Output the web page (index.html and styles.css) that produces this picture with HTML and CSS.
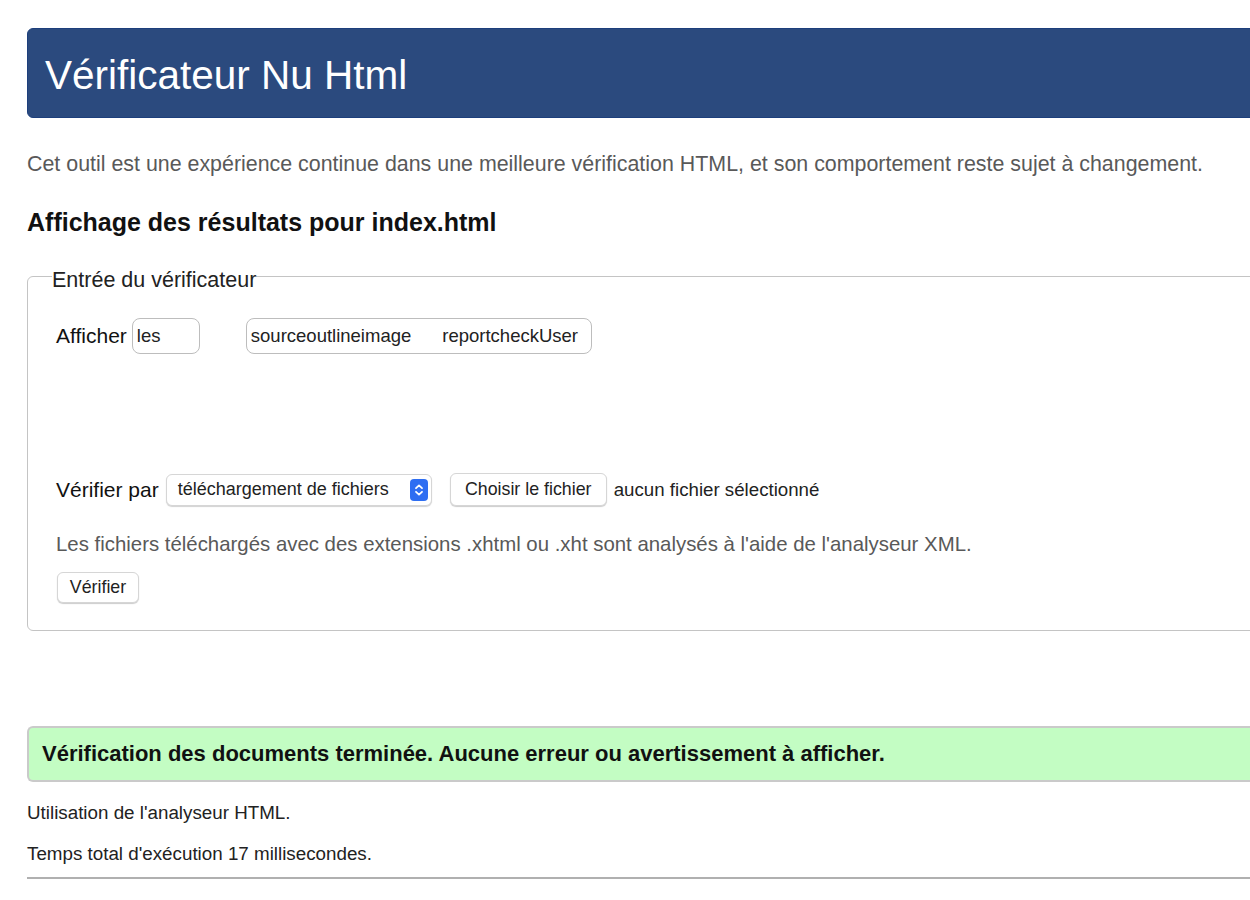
FILE: index.html
```html
<!DOCTYPE html>
<html lang="fr">
<head>
<meta charset="utf-8">
<title>Vérificateur Nu Html</title>
<link rel="stylesheet" href="styles.css">
</head>
<body>
<div class="page">
  <header class="banner"><h1 class="title">Vérificateur Nu Html</h1></header>
  <p class="intro">Cet outil est une expérience continue dans une meilleure vérification HTML, et son comportement reste sujet à changement.</p>
  <h2 class="results">Affichage des résultats pour index.html</h2>
  <fieldset class="checker">
    <legend class="checker-legend">Entrée du vérificateur</legend>
    <div class="row row-show">
      <span class="label">Afficher</span>
      <span class="box box-les">les</span>
      <span class="box box-opts"><span>sourceoutlineimage</span><span>reportcheckUser</span></span>
    </div>
    <div class="row row-by">
      <span class="label">Vérifier par</span>
      <span class="select">téléchargement de fichiers<span class="stepper"><svg width="12" height="16" viewBox="0 0 12 16"><path d="M3 6.2 6 3.4 9 6.2M3 9.8 6 12.6 9 9.8" fill="none" stroke="#fff" stroke-width="1.8" stroke-linecap="round" stroke-linejoin="round"/></svg></span></span>
      <button class="btn btn-file">Choisir le fichier</button>
      <span class="file-state">aucun fichier sélectionné</span>
    </div>
    <p class="note">Les fichiers téléchargés avec des extensions .xhtml ou .xht sont analysés à l'aide de l'analyseur XML.</p>
    <button class="btn btn-check">Vérifier</button>
  </fieldset>
  <div class="success">Vérification des documents terminée. Aucune erreur ou avertissement à afficher.</div>
  <p class="stat stat-first">Utilisation de l'analyseur HTML.</p>
  <p class="stat">Temps total d'exécution 17 millisecondes.</p>
  <hr class="rule">
</div>
</body>
</html>
```
FILE: styles.css
```css
html {
  overflow: hidden;
  background: #fff;
}
body {
  margin: 0;
  font-family: "Liberation Sans", Arial, Helvetica, sans-serif;
  color: #111;
}
.page {
  margin-left: 27px;
  margin-right: -40px;
  padding-top: 28px;
}
.banner {
  height: 90px;
  box-sizing: border-box;
  background: #2b4a7e;
  border: 1px solid #1d3f7c;
  border-radius: 6px 0 0 6px;
  padding: 4px 0 0 17px;
}
.title {
  margin: 0;
  font-size: 40.5px;
  font-weight: normal;
  line-height: 84px;
  color: #fff;
  white-space: nowrap;
}
.intro {
  margin: 31px 0 0;
  font-size: 21.4px;
  line-height: 30px;
  color: #595959;
  white-space: nowrap;
}
.results {
  margin: 25px 0 0;
  font-size: 25px;
  line-height: 36px;
  font-weight: bold;
  color: #111;
}
.checker {
  margin: 18px 0 0;
  padding: 23px 28px 27px;
  border: 1px solid #c4c4c4;
  border-radius: 6px 0 0 6px;
  min-width: 0;
}
.checker-legend {
  padding: 7px 0 0;
  margin-left: -4px;
  font-size: 21.5px;
  line-height: 30px;
  color: #222;
}
.row {
  display: flex;
  align-items: center;
  white-space: nowrap;
}
.label {
  font-size: 21px;
  color: #111;
}
.row-show .label {
  margin-right: 5px;
}
.box {
  display: flex;
  align-items: center;
  height: 36px;
  box-sizing: border-box;
  border: 1px solid #bdbdbd;
  border-radius: 8px;
  font-size: 18.5px;
  color: #222;
  padding: 0 4px;
}
.box-les {
  width: 68px;
}
.box-opts {
  margin-left: 46px;
  width: 346px;
  gap: 31px;
}
.row-by {
  margin-top: 119px;
}
.row-by .label {
  margin-right: 7px;
}
.select {
  display: flex;
  align-items: center;
  justify-content: space-between;
  width: 266px;
  height: 32px;
  box-sizing: border-box;
  padding: 0 2px 0 11px;
  background: #fff;
  border: 1px solid #d6d6d6;
  border-radius: 6px;
  box-shadow: 0 1px 1px rgba(0, 0, 0, 0.18);
  font-size: 18px;
  color: #222;
}
.stepper {
  display: flex;
  align-items: center;
  justify-content: center;
  width: 18px;
  height: 22px;
  margin-right: 1px;
  background: #2e6ef2;
  border-radius: 4px;
}
.btn {
  font-family: inherit;
  background: #fff;
  border: 1px solid #d6d6d6;
  border-radius: 6px;
  box-shadow: 0 1px 1px rgba(0, 0, 0, 0.2);
  color: #222;
  font-size: 17.8px;
  padding: 0;
  box-sizing: border-box;
  white-space: nowrap;
}
.btn-file {
  margin-left: 18px;
  width: 157px;
  height: 33px;
}
.file-state {
  margin-left: 7px;
  font-size: 18.7px;
  color: #222;
}
.note {
  margin: 23px 0 0;
  font-size: 20.4px;
  line-height: 30px;
  color: #595959;
  white-space: nowrap;
}
.btn-check {
  display: block;
  margin: 13px 0 0 1px;
  width: 82px;
  height: 31px;
}
.success {
  margin-top: 95px;
  height: 56px;
  box-sizing: border-box;
  display: flex;
  align-items: center;
  padding-left: 13px;
  background: #c3fdc3;
  border: 2px solid #cacaca;
  border-right: none;
  border-radius: 6px 0 0 6px;
  font-size: 22px;
  font-weight: bold;
  color: #111;
  white-space: nowrap;
}
.stat {
  margin: 14px 0 0;
  font-size: 18.8px;
  line-height: 27px;
  color: #222;
}
.stat-first {
  margin-top: 17px;
}
.rule {
  margin: 10px 0 0;
  border: none;
  border-top: 2px solid #b0b0b0;
}
```
